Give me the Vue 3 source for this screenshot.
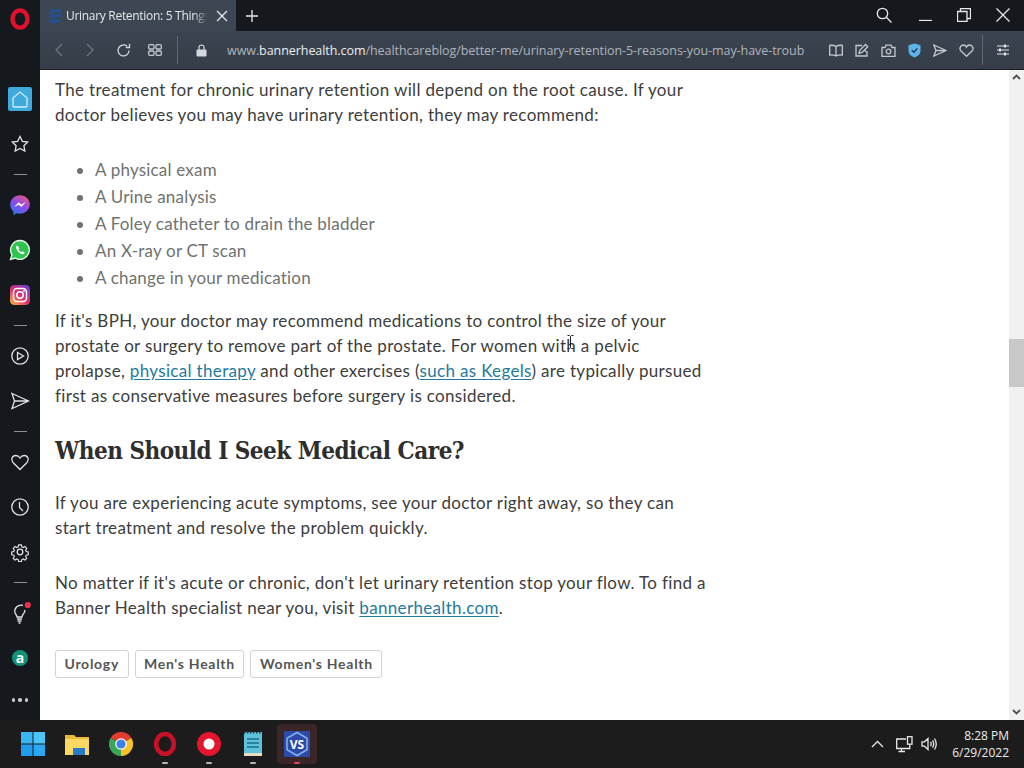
<script setup>
const items = ['A physical exam', 'A Urine analysis', 'A Foley catheter to drain the bladder', 'An X-ray or CT scan', 'A change in your medication']
const tags = ['Urology', "Men's Health", "Women's Health"]
</script>

<template>
  <div class="screen">
    <div class="window">
      <aside class="side">
        <div class="logo">
          <svg width="22" height="22" viewBox="0 0 22 22"><ellipse cx="11" cy="11" rx="7.5" ry="8.6" fill="none" stroke="#e0102f" stroke-width="4.4"/></svg>
        </div>
        <div class="spacer"></div>
        <div class="si">
          <span class="home"><svg width="24" height="24" viewBox="0 0 24 24" class="line w"><path d="M5 11 12 5l7 6v8q0 1-1 1H6q-1 0-1-1z"/></svg></span>
        </div>
        <div class="si"><svg width="20" height="20" viewBox="0 0 20 20" class="line"><path d="M10 2.500 12.400 7.400 17.700 8 13.900 11.700 14.800 17 10 14.500 5.200 17 6.100 11.700 2.300 8 7.600 7.400z"/></svg></div>
        <div class="dv"></div>
        <div class="si">
          <svg width="22" height="22" viewBox="0 0 22 22">
            <defs><linearGradient id="ms" x1="0.2" y1="1" x2="0.8" y2="0"><stop offset="0" stop-color="#2a7bf0"/><stop offset=".5" stop-color="#8a4be8"/><stop offset="1" stop-color="#f0557d"/></linearGradient></defs>
            <path d="M11 1.200C5.500 1.200 1.200 5.200 1.200 10.500c0 2.800 1.200 5.200 3.200 6.900V21l3.300-1.800c1 .3 2.100.4 3.300.4 5.500 0 9.800-4 9.800-9.100S16.500 1.200 11 1.200z" fill="url(#ms)"/>
            <path d="M5 13 9.700 8.200 12.200 10.500 17 8 12.300 13 9.800 10.700z" fill="#fff"/>
          </svg>
        </div>
        <div class="si">
          <svg width="22" height="22" viewBox="0 0 22 22">
            <path d="M11 1.500a9.400 9.400 0 0 0-8 14.300L1.500 20.500l4.800-1.400A9.400 9.400 0 1 0 11 1.500z" fill="#2fc34f" stroke="#dff5e2" stroke-width="1.400"/>
            <path d="M7.700 6.500c-1 1-1 2.800.6 5s3.600 3.800 5.400 3.700c1.300-.1 1.900-1 1.900-1.800l-2.200-1.100-.9 1c-1.200-.4-2.300-1.500-3-2.800l.8-1-1-2.100z" fill="#fff"/>
          </svg>
        </div>
        <div class="si">
          <svg width="22" height="22" viewBox="0 0 22 22">
            <defs><linearGradient id="ig" x1="0.1" y1="1" x2="0.9" y2="0"><stop offset="0" stop-color="#fcb045"/><stop offset=".45" stop-color="#e1306c"/><stop offset="1" stop-color="#6a3fd0"/></linearGradient></defs>
            <rect x="1" y="1" width="20" height="20" rx="4.500" fill="url(#ig)"/>
            <rect x="4.500" y="4.500" width="13" height="13" rx="3.500" fill="none" stroke="#fff" stroke-width="1.500"/>
            <circle cx="11" cy="11" r="3.200" fill="none" stroke="#fff" stroke-width="1.500"/>
            <circle cx="15" cy="7" r=".9" fill="#fff"/>
          </svg>
        </div>
        <div class="dv"></div>
        <div class="si"><svg width="20" height="20" viewBox="0 0 20 20" class="line"><circle cx="10" cy="10" r="8.200"/><path d="M7.500 6.500 13.500 10 7.500 13.500z"/></svg></div>
        <div class="si"><svg width="20" height="20" viewBox="0 0 20 20" class="line"><path d="M2 2.500 18.500 10 2 17.500 4.500 10zM4.500 10H18"/></svg></div>
        <div class="dv"></div>
        <div class="si"><svg width="20" height="20" viewBox="0 0 20 20" class="line"><path d="M10 17.500 3 10.500C.5 7.800 2 3.500 5.800 3.500 7.700 3.500 9.200 4.700 10 6c.8-1.300 2.300-2.500 4.200-2.500C18 3.500 19.500 7.800 17 10.500z"/></svg></div>
        <div class="si"><svg width="20" height="20" viewBox="0 0 20 20" class="line"><circle cx="10" cy="10" r="8.200"/><path d="M9.500 5v5.500L13 14"/></svg></div>
        <div class="si"><svg width="20" height="20" viewBox="0 0 20 20" class="line"><circle cx="10" cy="10" r="2.800"/><path d="M8.500 2h3l.5 2.300 1.500.7 2-1.200 2 2.200-1.200 2 .6 1.500 2.300.5v3l-2.300.5-.6 1.500 1.200 2-2 2-2-1.200-1.500.6-.5 2.300h-3l-.5-2.300-1.500-.6-2 1.200-2-2 1.200-2-.6-1.500-2.300-.5v-3l2.300-.5.6-1.500-1.200-2 2-2.200 2 1.200 1.500-.7z" transform="translate(1 1) scale(.9)"/></svg></div>
        <div class="dv"></div>
        <div class="si bulb">
          <svg width="22" height="24" viewBox="0 0 22 24" class="line"><path d="M14 4.400A6.300 6.300 0 0 0 6 12c.8 1.500 1.800 2 2 4h5c.2-2 1.200-2.500 2-4 .6-1 .9-2 .9-3"/><path d="M8 18h5M8.500 20h4M9.500 22h2"/><circle cx="18.800" cy="4" r="3.100" fill="#e8304a" stroke="none"/></svg>
        </div>
        <div class="si"><span class="amz">a</span></div>
        <div class="si dots"><i></i><i></i><i></i></div>
      </aside>

      <div class="main">
        <header class="tabs">
          <div class="tab">
            <svg width="14" height="16" viewBox="0 0 14 16" class="fav"><path d="M1 3Q5 0 13 2V5Q6 3 1 6zM1 7.500Q6 5 13 6.500V9.500Q6 8 1 10.500zM1 12Q6 10 13 11.500Q9 16 4 15.500 2 15 1 12z" fill="#26508f"/></svg>
            <span class="title">Urinary Retention: 5 Things</span>
            <svg width="12" height="12" viewBox="0 0 12 12" class="line x"><path d="M1 1 11 11M11 1 1 11"/></svg>
          </div>
          <svg width="12" height="12" viewBox="0 0 12 12" class="line plus"><path d="M6 0V12M0 6H12"/></svg>
          <div class="fill"></div>
          <div class="winbtns">
            <svg width="16" height="16" viewBox="0 0 16 16" class="line sr"><circle cx="6.500" cy="6.500" r="5.200"/><path d="M10.300 10.300 15.500 15.500"/></svg>
            <svg width="13" height="13" viewBox="0 0 13 13" class="line mn"><path d="M0 12.500H13"/></svg>
            <svg width="14" height="14" viewBox="0 0 14 14" class="line"><path d="M.5 3.500h9.500v10H.500zM3.500 3.500V.5h10v10H10"/></svg>
            <svg width="14" height="14" viewBox="0 0 14 14" class="line"><path d="M.5.500 13.500 13.500M13.500.5.500 13.500"/></svg>
          </div>
        </header>

        <nav class="bar">
          <svg width="10" height="14" viewBox="0 0 10 14" class="line dim nb"><path d="M8 1 2 7l6 6"/></svg>
          <svg width="10" height="14" viewBox="0 0 10 14" class="line dim nf"><path d="M2 1l6 6-6 6"/></svg>
          <svg width="15" height="15" viewBox="0 0 15 15" class="line rl"><path d="M13 7.500A5.500 5.500 0 1 1 11 3.200"/><path d="M13.500 .8V4.500H9.800" /></svg>
          <svg width="14" height="12" viewBox="0 0 14 12" class="line gr"><rect x=".7" y=".7" width="5.300" height="4.300" rx="1"/><rect x="8" y=".7" width="5.300" height="4.300" rx="1"/><rect x=".7" y="7" width="5.300" height="4.300" rx="1"/><rect x="8" y="7" width="5.300" height="4.300" rx="1"/></svg>
          <span class="sep"></span>
          <svg width="11" height="13" viewBox="0 0 11 13" class="lock"><path d="M3 6V3.500a2.500 2.500 0 0 1 5 0V6" fill="none" stroke="#d5d8dc" stroke-width="1.200"/><rect x=".5" y="5.500" width="10" height="7" rx="1" fill="#d5d8dc"/></svg>
          <div class="url"><span class="d">www.</span><span class="b">bannerhealth.com</span><span class="d">/healthcareblog/better-me/urinary-retention-5-reasons-you-may-have-troub</span></div>
          <div class="tools">
            <svg width="14" height="13" viewBox="0 0 14 13" class="line"><path d="M7 2.500Q5 1 .7 1.300V11Q5 10.800 7 12 9 10.800 13.300 11V1.300Q9 1 7 2.500zM7 2.500V12"/></svg>
            <svg width="14" height="14" viewBox="0 0 14 14" class="line"><path d="M7 2.500H1V13H12V8"/><path d="M4 10.500 5 7 10.500 1.500 12.800 3.800 7.300 9.300zM9.500 6.500 11 9"/></svg>
            <svg width="15" height="13" viewBox="0 0 15 13" class="line"><path d="M1 3.500h3L5 1.200h5l1 2.300h3v8.800H1z"/><circle cx="7.500" cy="7.500" r="2.300"/></svg>
            <svg width="13" height="15" viewBox="0 0 13 15"><path d="M6.500.500 12.500 2.300V8c0 3-2.500 5.200-6 6.500C3 13.200.5 11 .5 8V2.300z" fill="#5cb4ea"/><path d="M3.800 7.300 5.800 9.200 9.300 5.500" fill="none" stroke="#1f3f63" stroke-width="1.500"/></svg>
            <svg width="14" height="13" viewBox="0 0 14 13" class="line"><path d="M.8 1 13.200 6.500.8 12 3 6.500zM3 6.500H13"/></svg>
            <svg width="15" height="13" viewBox="0 0 15 13" class="line"><path d="M7.500 12.300 2 7C0 5 1.200 1 4.300 1 5.800 1 7 2 7.500 3c.5-1 1.700-2 3.200-2C13.800 1 15 5 13 7z"/></svg>
          </div>
          <span class="sep2"></span>
          <svg width="12" height="12" viewBox="0 0 12 12" class="sl"><path d="M0 2h12M0 6h12M0 10h12" stroke="#e0e3e6" stroke-width="1"/><path d="M8 .5v3M3 4.500v3M8 8.500v3" stroke="#e0e3e6" stroke-width="2"/></svg>
        </nav>

        <div class="view">
          <article class="page">
            <p class="p1">The treatment for chronic urinary retention will depend on the root cause. If your doctor believes you may have urinary retention, they may recommend:</p>
            <ul>
              <li v-for="i in items" :key="i">{{ i }}</li>
            </ul>
            <p class="p2">If it's BPH, your doctor may recommend medications to control the size of your prostate or surgery to remove part of the prostate. For women with a pelvic prolapse, <a>physical therapy</a> and other exercises (<a>such as Kegels</a>) are typically pursued first as conservative measures before surgery is considered.</p>
            <h2>When Should I Seek Medical Care?</h2>
            <p class="p3">If you are experiencing acute symptoms, see your doctor right away, so they can start treatment and resolve the problem quickly.</p>
            <p class="p4">No matter if it's acute or chronic, don't let urinary retention stop your flow. To find a Banner Health specialist near you, visit <a>bannerhealth.com</a>.</p>
            <div class="tags"><span v-for="t in tags" :key="t" class="tag">{{ t }}</span></div>
          </article>
          <div class="sb">
            <svg width="9" height="6" viewBox="0 0 9 6" class="ar"><path d="M1 5 4.500 1.500 8 5" fill="none" stroke="#505050" stroke-width="1.800"/></svg>
            <div class="thumb"></div>
            <svg width="9" height="6" viewBox="0 0 9 6" class="ar ad"><path d="M1 1 4.500 4.500 8 1" fill="none" stroke="#505050" stroke-width="1.800"/></svg>
          </div>
          <svg width="7" height="14" viewBox="0 0 7 14" class="cursor"><path d="M.5.500h2l1 1 1-1h2M3.500 1.500v11M.5 13.500h2l1-1 1 1h2" fill="none" stroke="#222" stroke-width="1"/></svg>
        </div>
      </div>
    </div>

    <footer class="task">
      <div class="apps">
        <div class="app">
          <svg width="24" height="24" viewBox="0 0 24 24"><rect x="0" y="0" width="11.500" height="11.500" fill="#38b6f2"/><rect x="12.500" y="0" width="11.500" height="11.500" fill="#4cc4f5"/><rect x="0" y="12.500" width="11.500" height="11.500" fill="#1f9cec"/><rect x="12.500" y="12.500" width="11.500" height="11.500" fill="#2aa8ef"/></svg>
        </div>
        <div class="app">
          <svg width="26" height="24" viewBox="0 0 26 24"><path d="M1 3h9l2 2H25V23H1z" fill="#e9b93d"/><rect x="1" y="7" width="24" height="16" fill="#fbd863"/><rect x="9" y="16" width="12" height="7" fill="#2a79c7"/></svg>
        </div>
        <div class="app">
          <svg width="24" height="24" viewBox="0 0 24 24"><path d="M12 12 22.400 6A12 12 0 0 0 1.600 6z" fill="#e33b2e"/><path d="M12 12 1.600 6A12 12 0 0 0 12 24z" fill="#3aa757"/><path d="M12 12 22.400 6A12 12 0 0 1 12 24z" fill="#f8c32a"/><circle cx="12" cy="12" r="5.800" fill="#fff"/><circle cx="12" cy="12" r="4.600" fill="#3f7fe6"/></svg>
        </div>
        <div class="app on">
          <svg width="24" height="24" viewBox="0 0 24 24"><ellipse cx="12" cy="12" rx="8.800" ry="10" fill="none" stroke="#c8102a" stroke-width="4.600"/></svg>
        </div>
        <div class="app on">
          <svg width="24" height="24" viewBox="0 0 24 24"><circle cx="12" cy="12" r="12" fill="#e3162e"/><circle cx="12" cy="12" r="5.500" fill="#fff"/></svg>
        </div>
        <div class="app on">
          <svg width="20" height="26" viewBox="0 0 20 26"><rect x="1" y="1" width="18" height="22" fill="#5ec2dc"/><path d="M1 1.500H19" stroke="#234" stroke-width="2" stroke-dasharray="1.500 1.500"/><path d="M4 8h12M4 12h12M4 16h12" stroke="#1d6c8c" stroke-width="1.600"/><rect x="1" y="22" width="18" height="3" fill="#e6dcc0"/></svg>
        </div>
        <div class="app on red active">
          <svg width="26" height="26" viewBox="0 0 26 26"><rect width="26" height="26" fill="#2d4aa8"/><path d="M13 1.500 23 7.200V18.800L13 24.500 3 18.800V7.200z" fill="none" stroke="#7fb0e8" stroke-width="1.600"/><text x="13" y="18" text-anchor="middle" class="vs">VS</text></svg>
        </div>
      </div>
      <div class="fill"></div>
      <div class="tray">
        <svg width="13" height="8" viewBox="0 0 13 8" class="line"><path d="M1 7 6.500 1.500 12 7"/></svg>
        <svg width="17" height="17" viewBox="0 0 17 17" class="line net"><path d="M10 3H.7v9.500H10M5.500 12.500V15.500M2.500 15.500H9"/><rect x="11.500" y=".7" width="4.500" height="7.500" /><path d="M13.750 8.200V12.500H10"/></svg>
        <svg width="17" height="14" viewBox="0 0 17 14" class="line spk"><path d="M1 4.800H3.500L7 1.500V12.500L3.500 9.200H1zM9.500 5Q11 7 9.500 9M11.500 3.500Q14 7 11.500 10.500M13.500 1.500Q17 7 13.500 12.500"/></svg>
        <div class="clock"><div>8:28 PM</div><div>6/29/2022</div></div>
      </div>
    </footer>
  </div>
</template>

<style>
html, body { margin: 0; background: #16181d; }
</style>

<style scoped>
.screen { width: 1024px; height: 768px; display: flex; flex-direction: column; overflow: hidden; position: relative; }
.window { display: flex; height: 720px; }
.line { fill: none; stroke: currentColor; stroke-width: 1.300; }
.side { width: 40px; flex: none; background: #15181d; color: #dfe2e6; display: flex; flex-direction: column; align-items: center; overflow: hidden; }
.logo { height: 38px; flex: none; display: flex; align-items: center; justify-content: center; }
.spacer { height: 38.500px; flex: none; }
.si { height: 45px; width: 40px; flex: none; display: flex; align-items: center; justify-content: center; }
.dv { height: 16px; width: 13px; flex: none; display: flex; align-items: center; }
.dv::before { content: ""; display: block; width: 13px; height: 1px; background: #8c9096; }
.home { width: 24px; height: 24px; border-radius: 2px; background: #3fa9dc; display: flex; }
.w { color: #cfeefa; }
.amz { width: 16px; height: 16px; border-radius: 50%; background: #12917a; color: #fff; font: 700 14px/15px "Open Sans", sans-serif; text-align: center; }
.dots { gap: 3px; height: 39px; }
.dots i { width: 3.500px; height: 3.500px; border-radius: 50%; background: #c9ccd0; }
.main { flex: 1; min-width: 0; display: flex; flex-direction: column; }
.tabs { height: 31px; flex: none; display: flex; align-items: center; background: #15181d; color: #e6e8ea; }
.tab { width: 196px; height: 31px; background: #3d4753; display: flex; align-items: center; box-sizing: border-box; padding-left: 8px; }
.fav { flex: none; margin-right: 4px; }
.title { width: 142px; white-space: nowrap; overflow: hidden; font: 12px "Open Sans", sans-serif; letter-spacing: -.3px; color: #e4e7ea; -webkit-mask-image: linear-gradient(90deg, #000 90%, transparent); mask-image: linear-gradient(90deg, #000 90%, transparent); }
.x { margin-left: 8px; flex: none; }
.plus { margin-left: 10px; }
.fill { flex: 1; }
.winbtns { display: flex; align-items: center; gap: 25px; padding-right: 14px; margin-top: -2px; }
.sr { margin-right: 2px; }
.bar { height: 38px; flex: none; display: flex; align-items: center; background: linear-gradient(#3b4551, #343d48); color: #c5c9ce; border-bottom: 1px solid #1a1d22; box-sizing: content-box; }
.dim { color: #6c7480; }
.nb { margin-left: 14px; }
.nf { margin-left: 21px; }
.rl { margin-left: 21px; color: #d5d8dc; }
.gr { margin-left: 17px; color: #c5c9ce; }
.sep { width: 1px; height: 28px; background: #5d6672; margin-left: 15px; }
.lock { margin-left: 18px; }
.url { margin-left: 20px; width: 577px; white-space: nowrap; overflow: hidden; font: 12.500px "Open Sans", sans-serif; letter-spacing: -.06px; }
.url .d { color: #aeb4bb; }
.url .b { color: #eceef0; }
.tools { display: flex; align-items: center; gap: 12px; margin-left: 25px; }
.sep2 { width: 1px; height: 30px; background: #5d6672; margin-left: 8px; }
.sl { margin-left: 14px; }
.view { flex: 1; min-height: 0; background: #fff; display: flex; position: relative; overflow: hidden; }
.page { flex: 1; min-width: 0; padding: 6.500px 0 0 15px; font: 400 17px/25px Lato, sans-serif; letter-spacing: .33px; color: #3d3d3d; }
.page p { margin: 0; width: 656px; }
.page a { color: #1f7a9c; text-decoration: underline; text-underline-offset: 2px; }
ul { margin: 29.500px 0 16.500px; padding-left: 40px; color: #6f7270; font-size: 17px; line-height: 27px; letter-spacing: .2px; }
h2 { margin: 23.500px 0 18.500px; font: 700 24px/40px "DejaVu Serif Condensed", "DejaVu Serif", serif; letter-spacing: -.5px; color: #2e2e2e; }
.page .p4 { margin-top: 30px; }
.tags { display: flex; gap: 6px; margin-top: 30.500px; }
.tag { height: 28px; box-sizing: border-box; border: 1px solid #d3d3d3; border-radius: 3px; padding: 0 8.500px; font: 700 14px/26px Lato, sans-serif; letter-spacing: .72px; color: #555; }
.sb { width: 15px; flex: none; background: #f1f1f1; position: relative; display: flex; flex-direction: column; align-items: center; }
.ar { margin-top: 4px; flex: none; }
.ad { margin-top: 322px; }
.thumb { width: 15px; height: 48px; margin-top: 259px; background: #c8c8c8; flex: none; }
.cursor { position: absolute; left: 527px; top: 265px; }
.task { height: 48px; flex: none; background: #1c1c1d; display: flex; align-items: center; color: #e8e8e8; }
.apps { display: flex; align-items: center; padding-left: 11px; }
.app { width: 44px; height: 40px; display: flex; align-items: center; justify-content: center; position: relative; border-radius: 4px; }
.app.on::after { content: ""; position: absolute; bottom: 0; left: 50%; margin-left: -3px; width: 6px; height: 2.500px; border-radius: 2px; background: #b5b5b5; }
.app.red::after { background: #e8475a; }
.active { background: #3a2527; width: 40px; margin: 0 2px; }
.vs { font: 700 12px "Open Sans", sans-serif; fill: #fff; }
.tray { display: flex; align-items: center; padding-right: 15px; }
.net { margin-left: 12px; }
.spk { margin-left: 8px; }
.clock { text-align: right; font: 12px/17px "Open Sans", sans-serif; color: #ececec; margin-left: 14px; }
</style>
